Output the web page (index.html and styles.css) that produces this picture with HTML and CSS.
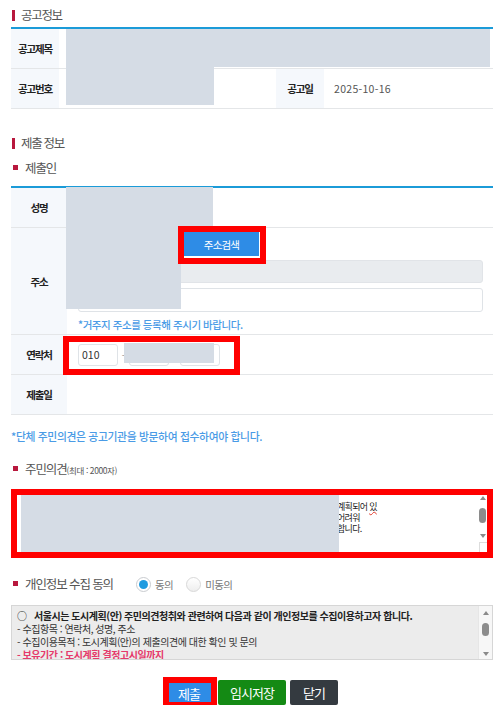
FILE: index.html
```html
<!DOCTYPE html>
<html lang="ko">
<head>
<meta charset="utf-8">
<title>의견 제출</title>
<link rel="stylesheet" href="styles.css">
</head>
<body>
<div class="page">
  <h3 class="sec-title">공고정보</h3>
  <div class="tbl tbl1">
    <div class="th">공고제목</div>
    <div class="td span3"></div>
    <div class="th">공고번호</div>
    <div class="td"></div>
    <div class="th">공고일</div>
    <div class="td val">2025-10-16</div>
    <div class="redact rd-title"></div>
    <div class="redact rd-no"></div>
  </div>

  <h3 class="sec-title sec2">제출 정보</h3>
  <h4 class="sub-title">제출인</h4>
  <div class="tbl tbl2">
    <div class="th">성명</div>
    <div class="td"></div>
    <div class="th">주소</div>
    <div class="td addr">
      <div class="addr-top">
        <div class="inp postal"></div>
        <button class="btn-search">주소검색</button>
      </div>
      <div class="inp inp-ro"></div>
      <div class="inp inp-full"></div>
      <p class="note">*거주지 주소를 등록해 주시기 바랍니다.</p>
    </div>
    <div class="th">연락처</div>
    <div class="td phone">
      <div class="inp ph">010</div>
      <span class="dash">-</span>
      <div class="inp ph"></div>
      <span class="dash">-</span>
      <div class="inp ph"></div>
    </div>
    <div class="th">제출일</div>
    <div class="td"></div>
    <div class="redact rd-name"></div>
    <div class="redact rd-addr"></div>
    <div class="redact rd-phone"></div>
    <div class="mark mk-search"></div>
    <div class="mark mk-phone"></div>
  </div>

  <p class="note note2">*단체 주민의견은 공고기관을 방문하여 접수하여야 합니다.</p>

  <h4 class="sub-title opinion-title">주민의견<small>(최대 : 2000자)</small></h4>
  <div class="opinion">
    <div class="opinion-inner">
      <div class="op-text">
        <div class="op-line">계획되어 <span class="spell">있</span></div>
        <div class="op-line">어려워</div>
        <div class="op-line">합니다.</div>
      </div>
      <div class="redact rd-op"></div>
      <div class="vscroll">
        <span class="arr up"></span>
        <span class="thumb"></span>
        <span class="arr down"></span>
      </div>
      <div class="resizer"></div>
    </div>
  </div>

  <div class="agree-row">
    <h4 class="sub-title">개인정보 수집 동의</h4>
    <label class="radio"><span class="dot on"></span>동의</label>
    <label class="radio"><span class="dot"></span>미동의</label>
  </div>

  <div class="privacy">
    <div class="pv-text">
      <p class="pv-head"><span class="circ">○</span>서울시는 도시계획(안) 주민의견청취와 관련하여 다음과 같이 개인정보를 수집이용하고자 합니다.</p>
      <p>- 수집항목 : 연락처, 성명, 주소</p>
      <p>- 수집이용목적 : 도시계획(안)의 제출의견에 대한 확인 및 문의</p>
      <p class="pv-red">- 보유기간 : 도시계획 결정고시일까지</p>
    </div>
    <div class="pv-scroll">
      <span class="arr up"></span>
      <span class="thumb"></span>
      <span class="arr down"></span>
    </div>
  </div>

  <div class="actions">
    <span class="submit-wrap"><button class="btn btn-blue">제출</button></span>
    <button class="btn btn-green">임시저장</button>
    <button class="btn btn-dark">닫기</button>
  </div>
</div>
</body>
</html>
```

FILE: styles.css
```css
* { box-sizing: border-box; }
html, body { margin: 0; padding: 0; background: #fff; }
body {
  font-family: "Noto Sans CJK KR", "Noto Sans", sans-serif;
  color: #333;
}
.page {
  width: 482px;
  margin-left: 11px;
}
p, h3, h4 { margin: 0; }

.sec-title {
  position: relative;
  font-size: 12.5px;
  font-weight: 400;
  color: #555;
  letter-spacing: -1.3px;
  line-height: 18px;
  padding-left: 10px;
  margin-top: 6px;
  margin-bottom: 3px;
}
.sec-title::before {
  content: "";
  position: absolute;
  left: 1px;
  top: 4px;
  width: 3px;
  height: 11px;
  background: #b8183d;
}
.sec2 { margin-top: 25px; margin-bottom: 0; }

.sub-title {
  position: relative;
  font-size: 12.5px;
  font-weight: 400;
  color: #555;
  letter-spacing: -1.1px;
  line-height: 18px;
  padding-left: 14px;
  margin-top: 7px;
}
.sub-title::before {
  content: "";
  position: absolute;
  left: 2px;
  top: 6px;
  width: 5px;
  height: 5px;
  background: #b8183d;
}
.sub-title small {
  font-size: 8.5px;
  letter-spacing: -0.4px;
}

.tbl {
  position: relative;
  display: grid;
  border-top: 2px solid #1b9bd8;
}
.tbl1 { grid-template-columns: 48px 217px 48px 1fr; }
.tbl2 { grid-template-columns: 56px 1fr; margin-top: 9px; }

.th, .td {
  border-bottom: 1px solid #e4e6e8;
  min-height: 40px;
  display: flex;
  align-items: center;
  font-size: 10.5px;
}
.th {
  justify-content: center;
  background: #f5f8fc;
  font-weight: 700;
  color: #222;
  letter-spacing: -1.2px;
}
.td { padding-left: 10px; color: #555; }
.span3 { grid-column: span 3; }
.val { font-size: 10.5px; letter-spacing: 0.3px; color: #555; }

.redact {
  position: absolute;
  background: #d5dce5;
}
.rd-title { left: 55px; top: 0; width: 424px; height: 38px; }
.rd-no { left: 55px; top: 0; width: 148px; height: 76px; }
.rd-name { left: 55px; top: -1px; width: 147px; height: 39px; }
.rd-addr { left: 55px; top: 38px; width: 115px; height: 83px; }
.rd-phone { left: 113px; top: 155px; width: 90px; height: 20px; }

.mark {
  position: absolute;
  border: 6px solid #ff0000;
}
.mk-search { left: 167px; top: 38px; width: 88px; height: 38px; }
.mk-phone { left: 52px; top: 148px; width: 177px; height: 39px; }

.addr {
  display: block;
  padding: 4px 10px 2px 11px;
  min-height: 107px;
}
.addr-top { display: flex; align-items: center; gap: 6px; }
.inp {
  border: 1px solid #dfe3e7;
  border-radius: 3px;
  background: #fff;
}
.postal { width: 100px; height: 24px; }
.btn-search {
  width: 75px;
  height: 24px;
  border: 0;
  background: #2e8ce6;
  color: #fff;
  font-family: inherit;
  font-size: 10.5px;
  letter-spacing: -0.8px;
  padding: 0;
}
.inp-ro { height: 23px; margin-top: 4px; background: #e9ecef; border-color: #e1e4e8; }
.inp-full { height: 24px; margin-top: 5px; }
.note {
  font-size: 10.5px;
  line-height: 14px;
  color: #4a9be6;
  font-weight: 500;
  letter-spacing: -0.45px;
  margin-top: 6px;
}

.phone { padding-left: 11px; }
.ph {
  width: 40px;
  height: 22px;
  display: flex;
  align-items: center;
  padding-left: 3px;
  font-size: 10.5px;
  color: #333;
}
.dash {
  width: 11px;
  text-align: center;
  font-size: 10px;
  color: #999;
}

.note2 { margin-top: 14px; font-size: 10.8px; letter-spacing: -0.35px; }
.opinion-title { margin-top: 17px; }

.opinion {
  margin-top: 10px;
  border: 6px solid #ff0000;
  height: 69px;
}
.opinion-inner {
  position: relative;
  height: 57px;
  background: #fff;
  overflow: hidden;
}
.op-text {
  position: absolute;
  left: 320px;
  top: 6px;
  font-size: 9px;
  color: #222;
  letter-spacing: -0.7px;
}
.op-line { height: 11px; line-height: 11px; }
.spell { text-decoration: underline wavy #e0392b; text-decoration-thickness: 1px; }
.rd-op { left: 4px; top: 0; width: 318px; height: 57px; }

.vscroll {
  position: absolute;
  right: 0;
  top: 0;
  width: 8px;
  height: 46px;
}
.arr {
  position: absolute;
  left: 1px;
  width: 0; height: 0;
  border-left: 3px solid transparent;
  border-right: 3px solid transparent;
}
.arr.up { top: 1px; border-bottom: 4px solid #8a8a8a; }
.arr.down { bottom: 3px; border-top: 4px solid #8a8a8a; }
.thumb {
  position: absolute;
  left: 0;
  width: 7px;
  border-radius: 4px;
  background: #8c8c8c;
}
.vscroll .thumb { top: 13px; height: 15px; }
.resizer {
  position: absolute;
  right: 0;
  bottom: 0;
  width: 8px;
  height: 10px;
  border-left: 1px solid #ddd;
  border-top: 1px solid #ddd;
  background: #fff;
}

.agree-row {
  display: flex;
  align-items: center;
  margin-top: 17px;
  height: 18px;
}
.agree-row .sub-title { margin-top: 0; }
.radio {
  display: flex;
  align-items: center;
  font-size: 10.5px;
  color: #777;
  letter-spacing: -0.6px;
}
.radio:first-of-type { margin-left: 23px; }
.radio + .radio { margin-left: 13px; }
.dot {
  width: 15px;
  height: 15px;
  border-radius: 50%;
  border: 1px solid #d8d8d8;
  background: linear-gradient(#ffffff, #eeeeee);
  margin-right: 4px;
  position: relative;
}
.dot.on { background: #fff; border-color: #c9ccd0; }
.dot.on::after {
  content: "";
  position: absolute;
  left: 2px; top: 2px;
  width: 9px; height: 9px;
  border-radius: 50%;
  background: #1f9be0;
}

.privacy {
  position: relative;
  margin-top: 12px;
  height: 55px;
  border: 1px solid #d6d6d6;
  background: #ececec;
  overflow: hidden;
  display: flex;
}
.pv-text {
  flex: 1;
  padding: 3px 0 0 5px;
  font-size: 10px;
  line-height: 13px;
  color: #333;
  letter-spacing: -0.45px;
  white-space: nowrap;
}
.pv-head { font-weight: 700; color: #222; }
.circ { display: inline-block; width: 17px; font-weight: 400; }
.pv-red { color: #e5396a; font-weight: 700; }
.pv-scroll {
  position: relative;
  width: 14px;
  background: #f7f7f7;
  border-left: 1px solid #e6e6e6;
}
.pv-scroll .arr { left: 4px; }
.pv-scroll .arr.up { top: 5px; }
.pv-scroll .arr.down { bottom: 3px; }
.pv-scroll .thumb { left: 3px; top: 17px; height: 13px; width: 7px; }

.actions {
  display: flex;
  justify-content: center;
  align-items: center;
  gap: 4px;
  margin-top: 20px;
  padding-right: 2px;
}
.btn {
  height: 25px;
  border: 0;
  border-radius: 2px;
  font-family: inherit;
  font-size: 13px;
  letter-spacing: -1px;
  color: #fff;
  padding: 0;
}
.submit-wrap {
  position: relative;
  display: block;
  width: 50px;
  height: 25px;
}
.btn-blue { width: 50px; background: #2e8ce6; border-radius: 0; }
.submit-wrap::after {
  content: "";
  position: absolute;
  left: -1px; top: -3px; right: -3px; bottom: -3px;
  border: 6px solid #ff0000;
}
.btn-green { width: 68px; background: #148a14; }
.btn-dark { width: 48px; background: #343a40; }
```
